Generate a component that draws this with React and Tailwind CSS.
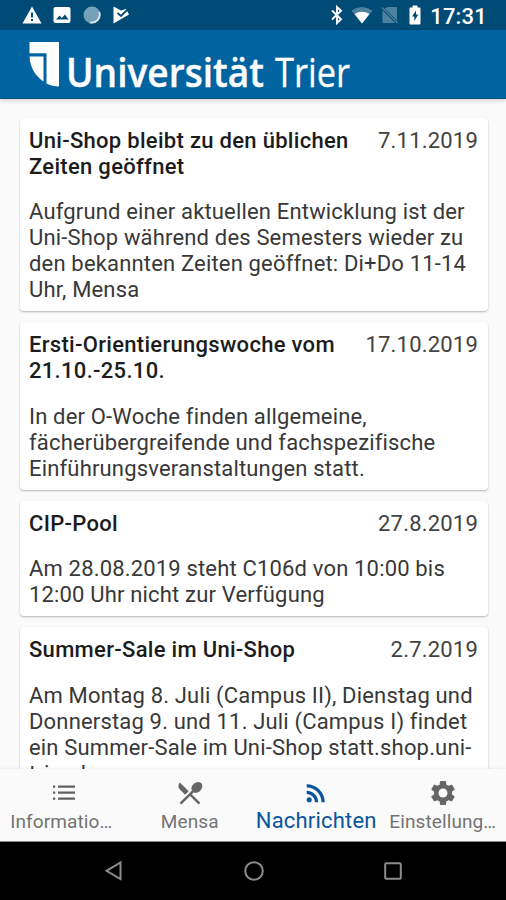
import React, { useState } from "react";
import { MdRestaurantMenu, MdRssFeed, MdSettings } from "react-icons/md";

const news = [
  {
    title: ["Uni-Shop bleibt zu den üblichen", "Zeiten geöffnet"],
    date: "7.11.2019",
    body: [
      "Aufgrund einer aktuellen Entwicklung ist der",
      "Uni-Shop während des Semesters wieder zu",
      "den bekannten Zeiten geöffnet: Di+Do 11-14",
      "Uhr, Mensa",
    ],
  },
  {
    title: ["Ersti-Orientierungswoche vom", "21.10.-25.10."],
    date: "17.10.2019",
    body: [
      "In der O-Woche finden allgemeine,",
      "fächerübergreifende und fachspezifische",
      "Einführungsveranstaltungen statt.",
    ],
  },
  {
    title: ["CIP-Pool"],
    date: "27.8.2019",
    body: ["Am 28.08.2019 steht C106d von 10:00 bis", "12:00 Uhr nicht zur Verfügung"],
  },
  {
    title: ["Summer-Sale im Uni-Shop"],
    date: "2.7.2019",
    body: [
      "Am Montag 8. Juli (Campus II), Dienstag und",
      "Donnerstag 9. und 11. Juli (Campus I) findet",
      "ein Summer-Sale im Uni-Shop statt.shop.uni-",
      "trier.de",
    ],
  },
];

function ListIcon({ className }) {
  return (
    <svg viewBox="0 0 24 24" className={className} fill="currentColor">
      <path d="M1 5.500h2.200v2.200H1zM6 5.500h17v2.200H6zM1 11.500h2.200v2.200H1zM6 11.500h17v2.200H6zM1 17.500h2.200v2.200H1zM6 17.500h17v2.200H6z" />
    </svg>
  );
}

const tabs = [
  { id: "info", label: "Informatio…", icon: ListIcon },
  { id: "mensa", label: "Mensa", icon: MdRestaurantMenu },
  { id: "news", label: "Nachrichten", icon: MdRssFeed },
  { id: "settings", label: "Einstellung…", icon: MdSettings },
];

function StatusBar() {
  return (
    <div className="flex h-[30px] shrink-0 items-center justify-between bg-[#014b77] pl-[22px] pr-[19px] text-white">
      <div className="flex items-center gap-[10px]">
        <svg viewBox="0 0 20 18" className="h-[18px] w-5">
          <path d="M10 0.5L19.5 17.5H0.5z" fill="#fff" />
          <path d="M9 6.5h2v5H9zM9 13h2v2H9z" fill="#014b77" />
        </svg>
        <svg viewBox="0 0 18 18" className="ml-[1px] h-[18px] w-[18px]">
          <rect x="0.5" y="1" width="17" height="16" rx="2" fill="#fff" />
          <path d="M3 13.5l3.5-4 2.3 2.5L12 8.500l3.500 5z" fill="#014b77" />
        </svg>
        <svg viewBox="0 0 18 18" className="ml-[2px] h-[18px] w-[18px]">
          <circle cx="9" cy="9" r="8.500" fill="#74a0b8" />
          <path d="M16.200 6A8 8 0 0 1 7 16.500" fill="none" stroke="#dbe7ee" strokeWidth="1.800" />
        </svg>
        <svg viewBox="0 0 18 18" className="ml-[1px] h-[18px] w-[18px]">
          <path d="M1.500 0.500L9 4.500L14 3L17 8.500L1.500 17.500z" fill="#fff" />
          <path d="M5.500 7L9 10L15 4" fill="none" stroke="#014b77" strokeWidth="1.800" />
        </svg>
      </div>
      <div className="flex items-center">
        <svg viewBox="0 0 12 20" className="mr-[4px] h-5 w-3" fill="none" stroke="#fff" strokeWidth="1.900">
          <path d="M1 5.500L10 14.200L6 18V2L10 5.800L1 14.500" />
        </svg>
        <svg viewBox="0 0 22 18" className="ml-[4px] mr-[1px] h-[18px] w-[22px]">
          <path d="M11 17.500L0.500 4.500Q11-2.500 21.500 4.500z" fill="#4d819f" />
          <path d="M11 17.500L3.500 8Q11 3.500 18.500 8z" fill="#fff" />
        </svg>
        <svg viewBox="0 0 18 18" className="ml-[7px] h-[18px] w-[18px]">
          <path d="M7 1h9v13.500L3.500 2.500zM1.500 4L14 17H1.500z" fill="#4d819f" />
          <path d="M1 1.500L16.500 17" stroke="#4d819f" strokeWidth="1.300" />
        </svg>
        <svg viewBox="0 0 12 20" className="ml-[10px] h-5 w-3">
          <path d="M3.500 0.500h5v2h2a1 1 0 0 1 1 1v15a1 1 0 0 1-1 1h-9a1 1 0 0 1-1-1v-15a1 1 0 0 1 1-1h2z" fill="#fff" />
          <path d="M7 5.500L3 11.500h2.300v4.500l4-6.500H7z" fill="#014b77" />
        </svg>
        <span className="ml-[9px] pt-[3px] text-[22px] font-medium leading-none tracking-[0.2px]">17:31</span>
      </div>
    </div>
  );
}

function Header() {
  return (
    <header className="z-10 h-[69px] shrink-0 border-b border-[#10507f] bg-[#0163a0] shadow-[0_2px_4px_rgba(0,0,0,0.15)]">
      <svg viewBox="0 0 506 68" className="block h-[68px] w-full" fill="#fff">
        <path d="M29.500 12H59V56.500C54.500 56.500 50 55.500 46.500 53.500V23.300H29.500z" />
        <path d="M29.500 26.500H43.500V51.500C36 46.500 30 38 29.500 26.500z" />
        <text
          x="66"
          y="56.500"
          fontFamily="'Open Sans', sans-serif"
          fontSize="40"
          fontWeight="600"
          stroke="#fff"
          strokeWidth="0.400"
          textLength="198"
          lengthAdjust="spacingAndGlyphs"
        >
          Universität
        </text>
        <text
          x="275"
          y="56.500"
          fontFamily="'Open Sans', sans-serif"
          fontSize="40"
          fontWeight="400"
          stroke="#fff"
          strokeWidth="0.300"
          textLength="75"
          lengthAdjust="spacingAndGlyphs"
        >
          Trier
        </text>
      </svg>
    </header>
  );
}

function NewsCard({ item }) {
  return (
    <article className="shrink-0 rounded-[4px] bg-white px-[9px] pb-[7.5px] pt-[9.8px] text-[22px] leading-[26px] shadow-[0_1px_2px_rgba(0,0,0,0.28)]">
      <div className="flex justify-between whitespace-nowrap">
        <h2 className="font-medium tracking-[0.3px] text-[#1c1c1c]">
          {item.title.map((line) => (
            <div key={line}>{line}</div>
          ))}
        </h2>
        <time className="mr-[1px] tracking-[0.2px] text-[#424242]">{item.date}</time>
      </div>
      <div className="mt-[19.6px] whitespace-nowrap pb-[0.4px] tracking-[0.17px] text-[#383838]">
        {item.body.map((line) => (
          <div key={line}>{line}</div>
        ))}
      </div>
    </article>
  );
}

function TabBar({ active, onSelect }) {
  return (
    <nav className="z-10 grid h-[73px] shrink-0 grid-cols-4 border-b border-[#8a8a8a] bg-[#fafafa] shadow-[0_-1px_2px_rgba(0,0,0,0.06)]">
      {tabs.map(({ id, label, icon: Icon }) => {
        const isActive = id === active;
        return (
          <button
            key={id}
            onClick={() => onSelect(id)}
            className={
              isActive
                ? "flex flex-col items-center whitespace-nowrap pt-[8.5px] text-[#0a559c]"
                : "flex flex-col items-center whitespace-nowrap pt-[8.5px] text-[#737373]"
            }
          >
            <span className="flex h-[30px] items-center">
              <Icon
                className={
                  id === "info"
                    ? "mb-[2px] ml-[1px] h-[24px] w-[24px] text-[#606060]"
                    : id === "news"
                      ? "h-[28px] w-[28px]"
                      : "h-[30px] w-[30px] text-[#666666]"
                }
              />
            </span>
            <span
              className={
                isActive
                  ? "text-[22px] leading-[26px] tracking-[0.2px]"
                  : id === "info"
                    ? "mr-[4px] mt-[2.5px] text-[19px] leading-[24px] tracking-[0.1px]"
                    : "mt-[2.5px] text-[19px] leading-[24px] tracking-[0.1px]"
              }
            >
              {label}
            </span>
          </button>
        );
      })}
    </nav>
  );
}

function SystemNav() {
  return (
    <div className="grid h-[58px] shrink-0 grid-cols-[1fr_54px_1fr] items-center bg-black text-[#8c8c8c]">
      <svg viewBox="0 0 20 22" className="ml-[104px] h-[22px] w-5" fill="none" stroke="currentColor" strokeWidth="2">
        <path d="M16.500 2.500V19L2.500 10.800z" />
      </svg>
      <svg viewBox="0 0 22 22" className="ml-[1px] h-[22px] w-[22px] justify-self-center" fill="none" stroke="currentColor" strokeWidth="2">
        <circle cx="11" cy="11" r="8.800" />
      </svg>
      <svg viewBox="0 0 20 20" className="ml-[103px] h-5 w-5" fill="none" stroke="currentColor" strokeWidth="2">
        <rect x="2.200" y="2.200" width="15.600" height="15.600" rx="1" />
      </svg>
    </div>
  );
}

export default function App() {
  const [active, setActive] = useState("news");

  return (
    <div className="flex h-[900px] w-[506px] flex-col overflow-hidden bg-[#fafafa] font-[Roboto,sans-serif]">
      <StatusBar />
      <Header />
      <main className="flex min-h-0 flex-1 flex-col gap-[11.2px] overflow-hidden pl-5 pr-[18px] pt-[19px]">
        {news.map((item) => (
          <NewsCard key={item.date} item={item} />
        ))}
      </main>
      <TabBar active={active} onSelect={setActive} />
      <SystemNav />
    </div>
  );
}
